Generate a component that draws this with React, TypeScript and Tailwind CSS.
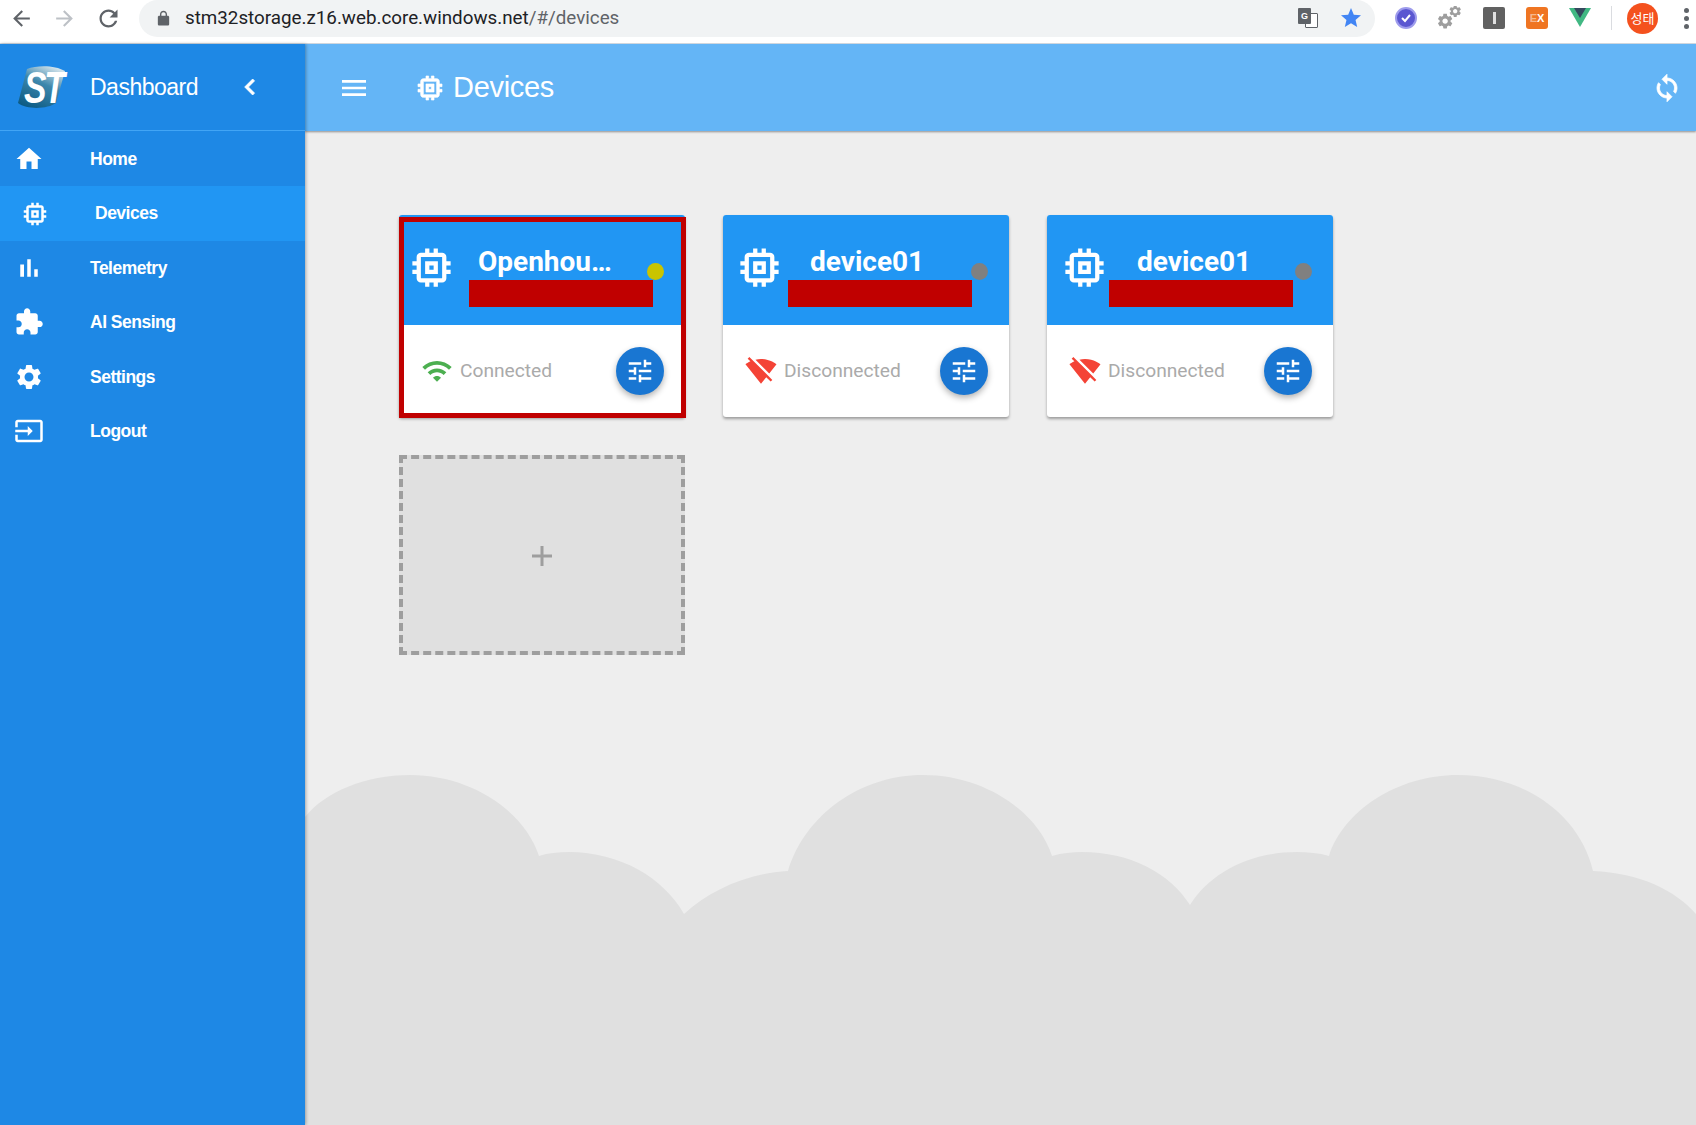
import React from 'react';

const paths = {
  memory: 'M15 9H9v6h6V9zm-2 4h-2v-2h2v2zm8-2V9h-2V7c0-1.1-.9-2-2-2h-2V3h-2v2h-2V3H9v2H7c-1.1 0-2 .9-2 2v2H3v2h2v2H3v2h2v2c0 1.1.9 2 2 2h2v2h2v-2h2v2h2v-2h2c1.1 0 2-.9 2-2v-2h2v-2h-2v-2h2zm-4 6H7V7h10v10z',
  home: 'M10 20v-6h4v6h5v-8h3L12 3 2 12h3v8z',
  bars: 'M5 9.2h3V19H5zM10.6 5h2.8v14h-2.8zm5.6 8H19v6h-2.8z',
  puzzle: 'M20.5 11H19V7c0-1.1-.9-2-2-2h-4V3.5C13 2.12 11.88 1 10.5 1S8 2.12 8 3.5V5H4c-1.1 0-1.99.9-1.99 2v3.8H3.5c1.49 0 2.7 1.21 2.7 2.7s-1.21 2.7-2.7 2.7H2V20c0 1.1.9 2 2 2h3.8v-1.5c0-1.49 1.21-2.7 2.7-2.7 1.49 0 2.7 1.21 2.7 2.7V22H17c1.1 0 2-.9 2-2v-4h1.5c1.38 0 2.5-1.12 2.5-2.5S21.88 11 20.5 11z',
  gear: 'M19.14 12.94c.04-.3.06-.61.06-.94 0-.32-.02-.64-.07-.94l2.03-1.58c.18-.14.23-.41.12-.61l-1.92-3.32c-.12-.22-.37-.29-.59-.22l-2.39.96c-.5-.38-1.03-.7-1.62-.94l-.36-2.54c-.04-.24-.24-.41-.48-.41h-3.84c-.24 0-.43.17-.47.41l-.36 2.54c-.59.24-1.13.57-1.62.94l-2.39-.96c-.22-.08-.47 0-.59.22L2.74 8.87c-.12.21-.08.47.12.61l2.03 1.58c-.05.3-.09.63-.09.94s.02.64.07.94l-2.03 1.58c-.18.14-.23.41-.12.61l1.92 3.32c.12.22.37.29.59.22l2.39-.96c.5.38 1.03.7 1.62.94l.36 2.54c.05.24.24.41.48.41h3.84c.24 0 .44-.17.47-.41l.36-2.54c.59-.24 1.13-.56 1.62-.94l2.39.96c.22.08.47 0 .59-.22l1.92-3.32c.12-.22.07-.47-.12-.61l-2.01-1.58zM12 15.6c-1.98 0-3.6-1.62-3.6-3.6s1.62-3.6 3.6-3.6 3.6 1.62 3.6 3.6-1.62 3.6-3.6 3.6z',
  input: 'M21 3.01H3c-1.1 0-2 .9-2 2V9h2V4.99h18v14.03H3V15H1v4.01c0 1.1.9 1.98 2 1.98h18c1.1 0 2-.88 2-1.98v-14c0-1.11-.9-2-2-2zM11 16l4-4-4-4v3H1v2h10v3z',
  wifi: 'M1 9l2 2c4.97-4.97 13.03-4.97 18 0l2-2C16.93 2.93 7.08 2.93 1 9zm8 8l3 3 3-3c-1.65-1.66-4.34-1.66-6 0zm-4-4l2 2c2.76-2.76 7.24-2.76 10 0l2-2C15.14 9.14 8.87 9.14 5 13z',
  wifiOff: 'M23.64 7c-.45-.34-4.93-4-11.64-4-1.5 0-2.89.19-4.15.48L18.18 13.8 23.64 7zm-6.6 8.22L3.27 1.44 2 2.72l2.05 2.06C1.91 5.76.59 6.82.36 7l11.63 14.49.01.01.01-.01 3.9-4.86 3.32 3.32 1.27-1.27-3.46-3.46z',
  tune: 'M3 17v2h6v-2H3zM3 5v2h10V5H3zm10 16v-2h8v-2h-8v-2h-2v6h2zM7 9v2H3v2h4v2h2V9H7zm14 4v-2H11v2h10zm-6-4h2V7h4V5h-4V3h-2v6z',
  sync: 'M12 4V1L8 5l4 4V6c3.31 0 6 2.69 6 6 0 1.01-.25 1.97-.7 2.8l1.46 1.46C19.54 15.03 20 13.57 20 12c0-4.42-3.58-8-8-8zm0 14c-3.31 0-6-2.69-6-6 0-1.01.25-1.97.7-2.8L5.24 7.74C4.46 8.97 4 10.43 4 12c0 4.42 3.58 8 8 8v3l4-4-4-4v3z',
  back: 'M20 11H7.83l5.59-5.59L12 4l-8 8 8 8 1.41-1.41L7.83 13H20v-2z',
  forward: 'M12 4l-1.41 1.41L16.17 11H4v2h12.17l-5.58 5.59L12 20l8-8z',
  reload: 'M17.65 6.35C16.2 4.9 14.21 4 12 4c-4.42 0-7.99 3.58-7.99 8s3.57 8 7.99 8c3.73 0 6.84-2.55 7.73-6h-2.08c-.82 2.33-3.04 4-5.65 4-3.31 0-6-2.69-6-6s2.69-6 6-6c1.66 0 3.14.69 4.22 1.78L13 11h7V4l-2.35 2.35z',
  lock: 'M18 8h-1V6c0-2.76-2.24-5-5-5S7 3.24 7 6v2H6c-1.1 0-2 .9-2 2v10c0 1.1.9 2 2 2h12c1.1 0 2-.9 2-2V10c0-1.1-.9-2-2-2zM9 6c0-1.66 1.34-3 3-3s3 1.34 3 3v2H9V6z',
  star: 'M12 17.27L18.18 21l-1.64-7.03L22 9.24l-7.19-.61L12 2 9.19 8.63 2 9.24l5.46 4.73L5.82 21z',
  menu: 'M3 18h18v-2H3v2zm0-5h18v-2H3v2zm0-7v2h18V6H3z',
  chevron: 'M15.41 7.41L14 6l-6 6 6 6 1.41-1.41L10.83 12z',
};

function Icon({ d, className }: { d: string; className: string }) {
  return (
    <svg viewBox="0 0 24 24" className={className} fill="currentColor">
      <path d={d} />
    </svg>
  );
}

function BrowserBar() {
  return (
    <div className="h-[44px] shrink-0 bg-white flex items-center border-b border-[#d5dde5] font-['Liberation_Sans',sans-serif]">
      <div className="flex items-center w-[139px] pl-[9px] gap-[18px] pb-[7px]">
        <Icon d={paths.back} className="w-[25px] h-[25px] text-[#5f6368]" />
        <Icon d={paths.forward} className="w-[25px] h-[25px] text-[#bdc1c6]" />
        <Icon d={paths.reload} className="w-[27px] h-[27px] text-[#5f6368]" />
      </div>
      <div className="w-[1236px] h-[37px] -mt-[7px] bg-[#f1f3f4] rounded-l-full rounded-r-full flex items-center pl-[16px] pr-[10px]">
        <Icon d={paths.lock} className="w-[17px] h-[17px] text-[#5f6368]" />
        <span className="ml-[13px] text-[18.8px] text-[#202124] font-['Roboto',sans-serif]">
          stm32storage.z16.web.core.windows.net<span className="text-[#5f6368]">/#/devices</span>
        </span>
        <div className="ml-auto flex items-center gap-[21px] pr-[2px]">
          <div className="relative w-[20px] h-[20px]">
            <div className="absolute right-0 bottom-0 w-[13px] h-[15px] bg-white border border-[#5f6368] rounded-[1px]" />
            <div className="absolute left-0 top-0 w-[13px] h-[16px] bg-[#5f6368] rounded-[1px] text-[9px] leading-[16px] text-white text-center font-bold">G</div>
          </div>
          <Icon d={paths.star} className="w-[24px] h-[24px] text-[#4285f4]" />
        </div>
      </div>
      <div className="flex items-center gap-[21px] pl-[20px] pb-[7px]">
        <div className="w-[22px] h-[22px] rounded-full bg-[#5b57d1] border-2 border-[#9e9cec] flex items-center justify-center">
          <svg viewBox="0 0 12 12" className="w-[12px] h-[12px]" fill="none" stroke="white" strokeWidth="2">
            <path d="M2 6l3 3 5-6" />
          </svg>
        </div>
        <svg viewBox="0 0 24 24" className="w-[24px] h-[24px] text-[#9e9e9e]" fill="currentColor">
          <g transform="translate(-2 6) scale(.76)"><path d={paths.gear} /></g>
          <g transform="translate(10 -2) scale(.6)"><path d={paths.gear} /></g>
        </svg>
        <div className="w-[22px] h-[22px] rounded-[2px] bg-[#616161] flex items-center justify-center">
          <div className="w-[3px] h-[12px] bg-[#e0e0e0]" />
        </div>
        <div className="w-[22px] h-[22px] rounded-[3px] bg-[#ef7522] flex items-center justify-center text-[11px] font-bold text-white">
          <span className="text-[#f6b78c]">E</span>X
        </div>
        <svg viewBox="0 0 22 20" className="w-[22px] h-[20px]">
          <path d="M0 0h22L11 19z" fill="#41b883" />
          <path d="M5 0h12l-6 10z" fill="#35495e" />
        </svg>
      </div>
      <div className="w-px h-[24px] bg-[#dadce0] ml-[20px] mb-[7px]" />
      <div className="ml-[15px] mb-[7px] w-[31px] h-[31px] rounded-full bg-[#f4511e] text-white text-[13px] flex items-center justify-center font-['Noto_Sans_CJK_KR',sans-serif]">
        성태
      </div>
      <div className="ml-[26px] mb-[7px] flex flex-col gap-[3px]">
        <div className="w-[5px] h-[5px] rounded-full bg-[#5f6368]" />
        <div className="w-[5px] h-[5px] rounded-full bg-[#5f6368]" />
        <div className="w-[5px] h-[5px] rounded-full bg-[#5f6368]" />
      </div>
    </div>
  );
}

function StLogo() {
  return (
    <div className="relative w-[52px] h-[44px] shrink-0">
      <svg viewBox="0 0 52 44" className="w-full h-full">
        <defs>
          <linearGradient id="stFill" x1="0.2" y1="1" x2="0.7" y2="0">
            <stop offset="0" stopColor="#0b5a83" />
            <stop offset="0.6" stopColor="#3d87ac" />
            <stop offset="1" stopColor="#cfe1ea" />
          </linearGradient>
        </defs>
        <path d="M12 4C22 0 40 0 50 6L41 38C33 44 12 45 3 38z" fill="url(#stFill)" />
      </svg>
      <span className="absolute left-[9px] top-[1px] text-[45px] leading-[44px] font-bold italic text-white font-['Liberation_Sans',sans-serif] tracking-[-3px] scale-x-75 origin-left">
        ST
      </span>
    </div>
  );
}

const navItems = [
  { label: 'Home', icon: paths.home },
  { label: 'Devices', icon: paths.memory, active: true },
  { label: 'Telemetry', icon: paths.bars },
  { label: 'AI Sensing', icon: paths.puzzle },
  { label: 'Settings', icon: paths.gear },
  { label: 'Logout', icon: paths.input },
];

function Sidebar() {
  return (
    <aside className="w-[305px] shrink-0 bg-[#1e88e5] text-white shadow-[1px_0_3px_rgba(0,0,0,0.3)] z-10">
      <div className="h-[87px] flex items-center pl-[15px] border-b border-[#42a5f5]">
        <StLogo />
        <span className="ml-[23px] text-[23px] tracking-[-0.5px] font-['Liberation_Sans',sans-serif]">Dashboard</span>
        <Icon d={paths.chevron} className="ml-[36px] w-[32px] h-[32px] stroke-current stroke-[0.6]" />
      </div>
      <nav className="pt-px">
        {navItems.map((item) => (
          <div
            key={item.label}
            className={`h-[54.4px] flex items-center text-[17.5px] font-semibold tracking-[-0.5px] font-['Liberation_Sans',sans-serif] ${
              item.active ? 'bg-[#2196f3] pl-[20px]' : 'pl-[14px]'
            }`}
          >
            <Icon d={item.icon} className="w-[30px] h-[30px] shrink-0" />
            <span className={item.active ? 'ml-[45px]' : 'ml-[46px]'}>{item.label}</span>
          </div>
        ))}
      </nav>
    </aside>
  );
}

const devices = [
  { name: 'Openhou…', connected: true, iconLeft: 'pl-[7px]', nameClass: 'ml-[21px]', redactLeft: 'left-[70px]' },
  { name: 'device01', connected: false, iconLeft: 'pl-[11px]', nameClass: 'ml-[25px]', redactLeft: 'left-[65px]' },
  { name: 'device01', connected: false, iconLeft: 'pl-[12px]', nameClass: 'ml-[27px]', redactLeft: 'left-[62px]' },
];

type DeviceCardProps = {
  name: string;
  connected: boolean;
  iconLeft: string;
  nameClass: string;
  redactLeft: string;
};

function DeviceCard({ name, connected, iconLeft, nameClass, redactLeft }: DeviceCardProps) {
  return (
    <div className="relative w-[286px] h-[202px] rounded-[3px] bg-white shadow-[0_2px_3px_rgba(0,0,0,0.35)]">
      <div className={`relative h-[110px] rounded-t-[3px] bg-[#2196f3] flex items-start text-white pt-[27px] ${iconLeft}`}>
        <Icon d={paths.memory} className="w-[51px] h-[51px] shrink-0" />
        <span className={`${nameClass} mt-[4px] text-[28px] leading-[32px] font-bold font-['Roboto',sans-serif]`}>{name}</span>
        <div className={`absolute top-[65px] w-[184px] h-[27px] bg-[#c00000] ${redactLeft}`} />
        <div className={`absolute left-[248px] top-[48px] w-[17px] h-[17px] rounded-full ${connected ? 'bg-[#c9c400]' : 'bg-[#808080]'}`} />
      </div>
      <div className="h-[92px] flex items-center pl-[22px] pr-[21px]">
        <Icon
          d={connected ? paths.wifi : paths.wifiOff}
          className={`w-[32px] h-[32px] shrink-0 ${connected ? 'text-[#4caf50]' : 'text-[#f44336]'}`}
        />
        <span className="ml-[7px] text-[19.2px] text-[#aaaaaa] font-['Roboto',sans-serif]">
          {connected ? 'Connected' : 'Disconnected'}
        </span>
        <button className="ml-auto w-[48px] h-[48px] rounded-full bg-[#1976d2] text-white flex items-center justify-center shadow-[0_3px_6px_rgba(0,0,0,0.3)]">
          <Icon d={paths.tune} className="w-[30px] h-[30px]" />
        </button>
      </div>
      {connected && <div className="absolute left-0 -right-px top-[2px] -bottom-px border-[5px] border-[#c00000]" />}
    </div>
  );
}

function Clouds() {
  return (
    <svg viewBox="305 775 1391 350" className="w-[1391px] h-[350px] block shrink-0" fill="#e0e0e0">
      <path d="M305 817 C325 792 365 775 410 775 C470 775 524 810 539 856 C548 853 558 852 569 852 C620 852 664 878 684 914 C710 890 748 873 788 871 C805 815 860 775 923 775 C985 775 1038 812 1052 856 C1062 853 1072 852 1082 852 C1130 852 1170 873 1190 905 C1210 873 1250 852 1297 852 C1308 852 1319 853 1329 856 C1343 812 1396 775 1458 775 C1525 775 1580 815 1593 871 C1640 873 1675 890 1696 914 L1696 1125 L305 1125 Z" />
    </svg>
  );
}

export default function App() {
  return (
    <div className="w-[1696px] h-[1125px] overflow-hidden flex flex-col bg-[#eeeeee]">
      <BrowserBar />
      <div className="flex-1 flex min-h-0">
        <Sidebar />
        <main className="flex-1 flex flex-col min-w-0">
          <header className="h-[87px] shrink-0 bg-[#64b5f6] text-white flex items-center pl-[33px] pr-[14px] shadow-[0_1px_2px_rgba(0,0,0,0.4)]">
            <Icon d={paths.menu} className="w-[32px] h-[32px]" />
            <Icon d={paths.memory} className="ml-[44px] w-[32px] h-[32px] stroke-current stroke-[0.5]" />
            <span className="ml-[7px] text-[29px] font-['Liberation_Sans',sans-serif] tracking-[-0.3px]">Devices</span>
            <Icon d={paths.sync} className="ml-auto w-[30px] h-[30px] stroke-current stroke-[0.6]" />
          </header>
          <section className="flex-1 min-h-0 pl-[94px] pt-[84px]">
            <div className="flex gap-[38px]">
              {devices.map((d, i) => (
                <DeviceCard key={i} {...d} />
              ))}
            </div>
            <div className="mt-[38px] w-[286px] h-[200px] bg-[#e0e0e0] border-[4px] border-dashed border-[#9e9e9e] flex items-center justify-center pt-[2px]">
              <svg viewBox="0 0 20 20" className="w-[20px] h-[20px]" stroke="#9e9e9e" strokeWidth="3">
                <path d="M0 10h20M10 0v20" />
              </svg>
            </div>
          </section>
          <Clouds />
        </main>
      </div>
    </div>
  );
}
